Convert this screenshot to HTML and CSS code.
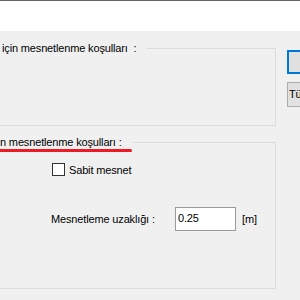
FILE: index.html
```html
<!DOCTYPE html>
<html lang="tr">
<head>
    <meta charset="UTF-8">
    <meta name="viewport" content="width=device-width, initial-scale=1.0">
    <title>Mesnetlenme</title>
    <link rel="stylesheet" href="styles.css">
</head>
<body>
    <div class="top-strip"></div>

    <div class="main">
        <div class="groups">
            <div class="group group-top">
                <div class="group-title title-first">için mesnetlenme koşulları &nbsp;:</div>
            </div>

            <div class="group group-bottom">
                <div class="group-title">n mesnetlenme koşulları :</div>

                <div class="row row-check">
                    <span class="check-box"></span>
                    <span class="check-label">Sabit mesnet</span>
                </div>

                <div class="row row-input">
                    <span class="field-label">Mesnetleme uzaklığı :</span>
                    <span class="text-box">0.25</span>
                    <span class="unit">[m]</span>
                </div>
            </div>
        </div>

        <div class="buttons">
            <div class="button button-default"></div>
            <div class="button">Tü</div>
        </div>
    </div>

    <div class="red-mark"></div>
</body>
</html>
```

FILE: styles.css
```css
html, body {
    margin: 0;
    height: 100%;
    overflow: hidden;
}

body {
    background-color: #f0f0f0;
    font-family: 'Liberation Sans', Arial, sans-serif;
    font-size: 11px;
    letter-spacing: -0.15px;
    line-height: 14px;
    color: #000;
    position: relative;
}

.top-strip {
    height: 30px;
    background-color: #ffffff;
    border-top: 1px solid #646464;
}

.main {
    display: flex;
    padding-top: 17px;
}

.groups {
    width: 276px;
    flex-shrink: 0;
}

.group {
    border: 1px solid #dcdcdc;
    border-left: none;
    box-sizing: border-box;
}

.group-top {
    height: 78px;
}

.group-bottom {
    height: 147px;
    margin-top: 16px;
}

.group-title {
    width: fit-content;
    margin-top: -8px;
    padding-right: 11px;
    background-color: #f0f0f0;
    white-space: nowrap;
}

.title-first {
    padding-left: 2px;
}

.row {
    display: flex;
    align-items: center;
    padding-left: 51px;
}

.row-check {
    margin-top: 14px;
    height: 13px;
}

.check-box {
    width: 11px;
    height: 11px;
    margin-left: 1px;
    border: 1px solid #333;
    background-color: #ffffff;
}

.check-label {
    margin-left: 4px;
}

.row-input {
    margin-top: 31px;
    height: 24px;
}

.field-label {
    width: 124px;
    white-space: nowrap;
}

.text-box {
    width: 57px;
    height: 22px;
    line-height: 20px;
    border: 1px solid #9a9a9a;
    background-color: #ffffff;
    padding-left: 2px;
}

.unit {
    margin-left: 6px;
}

.buttons {
    margin-left: 11px;
    padding-top: 2px;
}

.button {
    width: 75px;
    height: 23px;
    border: 1px solid #adadad;
    background-color: #e1e1e1;
    line-height: 23px;
    padding-left: 1px;
    margin-bottom: 8px;
}

.button-default {
    height: 20px;
    border: 2px solid #0078d7;
}

.red-mark {
    position: absolute;
    left: 0;
    top: 149px;
    width: 132px;
    height: 3px;
    background-color: #ec1c24;
    border-radius: 0 2px 2px 0;
}
```
